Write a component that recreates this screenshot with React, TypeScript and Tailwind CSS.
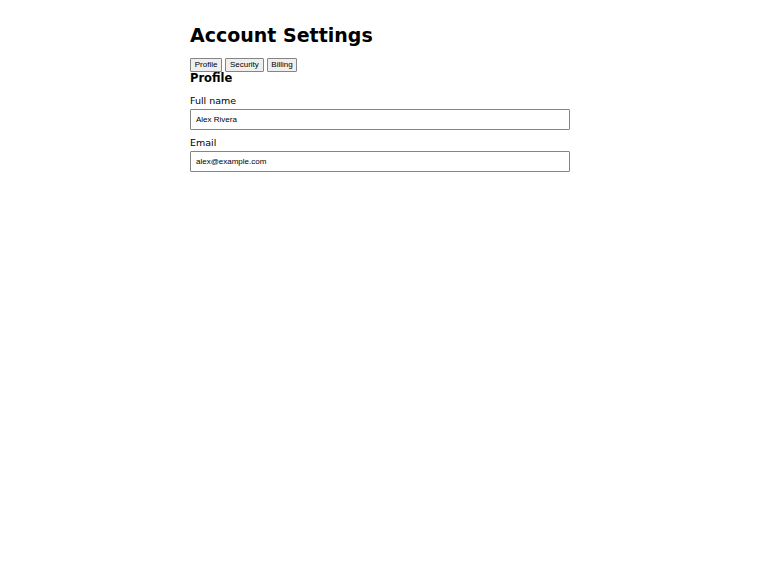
import { useState } from 'react';

const TABS = ['Profile', 'Security', 'Billing'] as const;
type Tab = (typeof TABS)[number];

const Field = ({ label, value, type = 'text' }: { label: string; value: string; type?: string }) => (
  <label className="block mb-[7px]">
    <span className="block text-[9.5px] leading-[1.164] mb-[3px]">{label}</span>
    <input
      type={type}
      defaultValue={value}
      className="block w-full h-[21px] px-[5px] border border-[#858585] rounded-[1px] bg-white text-[8px] font-['Liberation_Sans',Arial,sans-serif] text-black outline-none"
    />
  </label>
);

export default function App() {
  const [tab, setTab] = useState<Tab>('Profile');

  return (
    <div className="min-h-screen bg-white font-['DejaVu_Sans','Noto_Sans',sans-serif] text-black">
      <div className="w-[380px] mx-auto pt-[24px]">
        <h1 className="text-[19px] font-bold leading-[1.164] mb-[12px]">Account Settings</h1>

        <div className="flex gap-[3px]">
          {TABS.map((t) => (
            <button
              key={t}
              onClick={() => setTab(t)}
              className="h-[14px] px-[3.75px] border border-[#858585] rounded-[1px] bg-[#efefef] text-[8px] leading-none font-['Liberation_Sans',Arial,sans-serif] text-black"
            >
              {t}
            </button>
          ))}
        </div>

        <section>
          <h2 className="text-[11.5px] font-bold leading-[1.164] mb-[9.5px]">{tab}</h2>
          {tab === 'Profile' && (
            <>
              <Field label="Full name" value="Alex Rivera" />
              <Field label="Email" value="alex@example.com" type="email" />
            </>
          )}
        </section>
      </div>
    </div>
  );
}
